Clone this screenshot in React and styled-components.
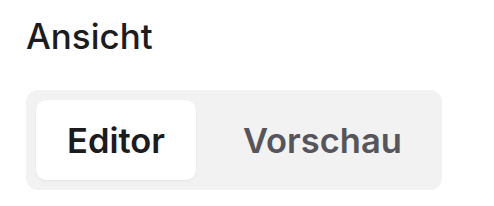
import React, { useState } from 'react';
import styled, { createGlobalStyle } from 'styled-components';

const Global = createGlobalStyle`
  body {
    margin: 0;
    background: #fff;
    font-family: Inter, "Noto Sans", sans-serif;
  }
`;

const Wrap = styled.div`
  padding: 14px 26px;
`;

const Label = styled.div`
  font-size: 35px;
  font-weight: 500;
  line-height: 44px;
  color: #1c1c1e;
  margin-bottom: 32px;
`;

const Segmented = styled.div`
  display: flex;
  gap: 16px;
  width: 416px;
  box-sizing: border-box;
  padding: 10px;
  background: #f2f2f2;
  border-radius: 12px;
`;

const Tab = styled.button`
  height: 80px;
  padding: 0 31px;
  border: none;
  border-radius: 10px;
  font-family: inherit;
  font-size: 34.5px;
  font-weight: 600;
  cursor: pointer;
  background: ${p => (p.$active ? '#fff' : 'transparent')};
  color: ${p => (p.$active ? '#1c1c1e' : '#55555b')};
  box-shadow: ${p => (p.$active ? '0 1px 3px rgba(0,0,0,0.06)' : 'none')};
`;

export default function App() {
  const [view, setView] = useState('editor');
  return (
    <>
      <Global />
      <Wrap>
        <Label>Ansicht</Label>
        <Segmented>
          <Tab $active={view === 'editor'} onClick={() => setView('editor')}>Editor</Tab>
          <Tab $active={view === 'preview'} onClick={() => setView('preview')}>Vorschau</Tab>
        </Segmented>
      </Wrap>
    </>
  );
}
